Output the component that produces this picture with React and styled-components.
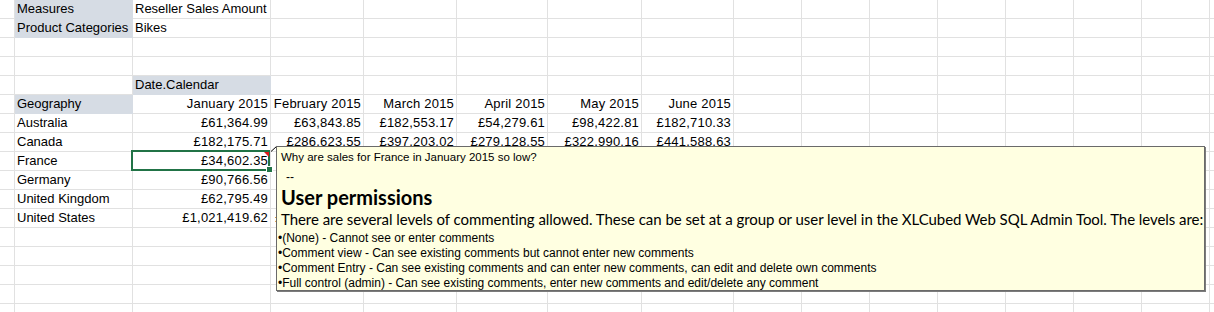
import React from 'react';
import styled, { createGlobalStyle } from 'styled-components';

const GlobalStyle = createGlobalStyle`
  html, body {
    margin: 0;
    padding: 0;
    background: #ffffff;
    overflow: hidden;
  }
`;

const GRID = '#e1e1e1';
const HEADER_FILL = '#d6dce4';
const COL_WIDTHS = [15, 118, 138, 93, 93, 91, 94, 92, 68, 68, 68, 68, 68, 68, 68];
const ROW_COUNT = 17;

const months = ['January 2015', 'February 2015', 'March 2015', 'April 2015', 'May 2015', 'June 2015'];

const pivot = [
    ['Australia', ['£61,364.99', '£63,843.85', '£182,553.17', '£54,279.61', '£98,422.81', '£182,710.33']],
    ['Canada', ['£182,175.71', '£286,623.55', '£397,203.02', '£279,128.55', '£322,990.16', '£441,588.63']],
    ['France', ['£34,602.35', '£52,318.40', '£118,902.77', '£40,115.26', '£71,664.09', '£126,480.52']],
    ['Germany', ['£90,766.56', '£71,203.14', '£143,587.90', '£66,930.48', '£88,751.32', '£152,316.07']],
    ['United Kingdom', ['£62,795.49', '£59,418.66', '£161,204.85', '£58,027.13', '£93,580.74', '£171,942.28']],
    ['United States', ['£1,021,419.62', '£1,041,494.44', '£1,496,372.81', '£902,664.30', '£1,208,337.95', '£1,682,109.46']],
];

const bullets = [
    '•(None) - Cannot see or enter comments',
    '•Comment view - Can see existing comments but cannot enter new comments',
    '•Comment Entry - Can see existing comments and can enter new comments, can edit and delete own comments',
    '•Full control (admin) - Can see existing comments, enter new comments and edit/delete any comment',
];

// builds the sheet as rows of { text, align, fill, selected }
const buildRows = () => {
    const rows = Array.from({ length: ROW_COUNT }, () => Array.from({ length: COL_WIDTHS.length + 1 }, () => ({})));
    rows[0][1] = { text: 'Measures', fill: true };
    rows[0][2] = { text: 'Reseller Sales Amount' };
    rows[1][1] = { text: 'Product Categories', fill: true };
    rows[1][2] = { text: 'Bikes' };
    rows[4][2] = { text: 'Date.Calendar', fill: true };
    rows[5][1] = { text: 'Geography', fill: true };
    months.forEach((m, i) => {
        rows[5][2 + i] = { text: m, align: 'right' };
    });
    pivot.forEach(([name, values], r) => {
        rows[6 + r][1] = { text: name };
        values.forEach((v, i) => {
            rows[6 + r][2 + i] = { text: v, align: 'right', selected: name === 'France' && i === 0 };
        });
    });
    return rows;
};

const Page = styled.div`
    position: relative;
    width: 1214px;
    height: 312px;
    overflow: hidden;
    background: #ffffff;
`;

const Sheet = styled.div`
    display: grid;
    grid-template-columns: ${COL_WIDTHS.map((w) => `${w}px`).join(' ')} 1fr;
    grid-auto-rows: 19px;
    font-family: "Liberation Sans", Arial, sans-serif;
    font-size: 13px;
    color: #000000;
`;

const Cell = styled.div`
    position: relative;
    box-sizing: border-box;
    border-right: 1px solid ${(p) => (p.$fill ? HEADER_FILL : GRID)};
    border-bottom: 1px solid ${(p) => (p.$fill ? HEADER_FILL : GRID)};
    background: ${(p) => (p.$fill ? HEADER_FILL : 'transparent')};
    padding: 0 2px 0 2px;
    line-height: 18px;
    white-space: nowrap;
    overflow: hidden;
    text-align: ${(p) => p.$align || 'left'};
    letter-spacing: ${(p) => (p.$align === 'right' ? '0.2px' : '0')};

    ${(p) =>
        p.$selected &&
        `
        overflow: visible;
        z-index: 2;
        &::after {
            content: '';
            position: absolute;
            left: -2px;
            top: -2px;
            right: 0;
            bottom: -1px;
            border: 2px solid #217346;
            pointer-events: none;
        }
    `}
`;

const CommentMark = styled.span`
    position: absolute;
    top: 0;
    right: 1px;
    width: 0;
    height: 0;
    border-top: 5px solid #e0191a;
    border-left: 5px solid transparent;
    z-index: 3;
`;

const FillHandle = styled.span`
    position: absolute;
    right: -2px;
    bottom: -2px;
    width: 5px;
    height: 5px;
    background: #217346;
    outline: 1px solid #ffffff;
    z-index: 3;
`;

const Connector = styled.svg`
    position: absolute;
    left: 270px;
    top: 145px;
    z-index: 4;
`;

const Comment = styled.div`
    position: absolute;
    left: 276px;
    top: 146px;
    width: 929px;
    height: 145px;
    box-sizing: border-box;
    display: flex;
    flex-direction: column;
    background: #ffffe1;
    border: 1px solid #6a6a6a;
    box-shadow: 1px 1px 0 #7c7c7c;
    z-index: 5;
    color: #000000;
    padding-left: 1px;
    overflow: hidden;
`;

const Small = styled.div`
    font-family: "Liberation Sans", Tahoma, sans-serif;
    white-space: nowrap;
`;

const Question = styled(Small)`
    font-size: 11.5px;
    line-height: 14px;
    padding: 3px 0 0 3px;
`;

const Dashes = styled(Small)`
    font-size: 12px;
    line-height: 18px;
    margin-top: 4px;
    padding-left: 8px;
`;

const Heading = styled.div`
    font-family: Lato, "Liberation Sans", sans-serif;
    font-weight: 700;
    font-size: 20px;
    line-height: 22px;
    padding-left: 3px;
    white-space: nowrap;
`;

const Lead = styled.div`
    font-family: Lato, "Liberation Sans", sans-serif;
    font-size: 15px;
    letter-spacing: -0.05px;
    line-height: 23px;
    padding-left: 3px;
    white-space: nowrap;
`;

const BulletList = styled.div`
    display: flex;
    flex-direction: column;
`;

const Bullet = styled(Small)`
    font-size: 12px;
    line-height: 15px;
`;

export default function App() {
    const rows = buildRows();
    return (
        <Page>
            <GlobalStyle />
            <Sheet>
                {rows.map((row, r) =>
                    row.map((cell, c) => (
                        <Cell key={`${r}-${c}`} $fill={cell.fill} $align={cell.align} $selected={cell.selected}>
                            {cell.text}
                            {cell.selected && <CommentMark />}
                            {cell.selected && <FillHandle />}
                        </Cell>
                    ))
                )}
            </Sheet>

            <Connector width="8" height="8" viewBox="0 0 8 8">
                <line x1="1" y1="6.5" x2="7" y2="1" stroke="#000000" strokeWidth="1" />
            </Connector>

            <Comment>
                <Question>Why are sales for France in January 2015 so low?</Question>
                <Dashes>--</Dashes>
                <Heading>User permissions</Heading>
                <Lead>
                    There are several levels of commenting allowed. These can be set at a group or user level in the XLCubed Web SQL Admin Tool. The levels are:
                </Lead>
                <BulletList>
                    {bullets.map((b) => (
                        <Bullet key={b}>{b}</Bullet>
                    ))}
                </BulletList>
            </Comment>
        </Page>
    );
}
